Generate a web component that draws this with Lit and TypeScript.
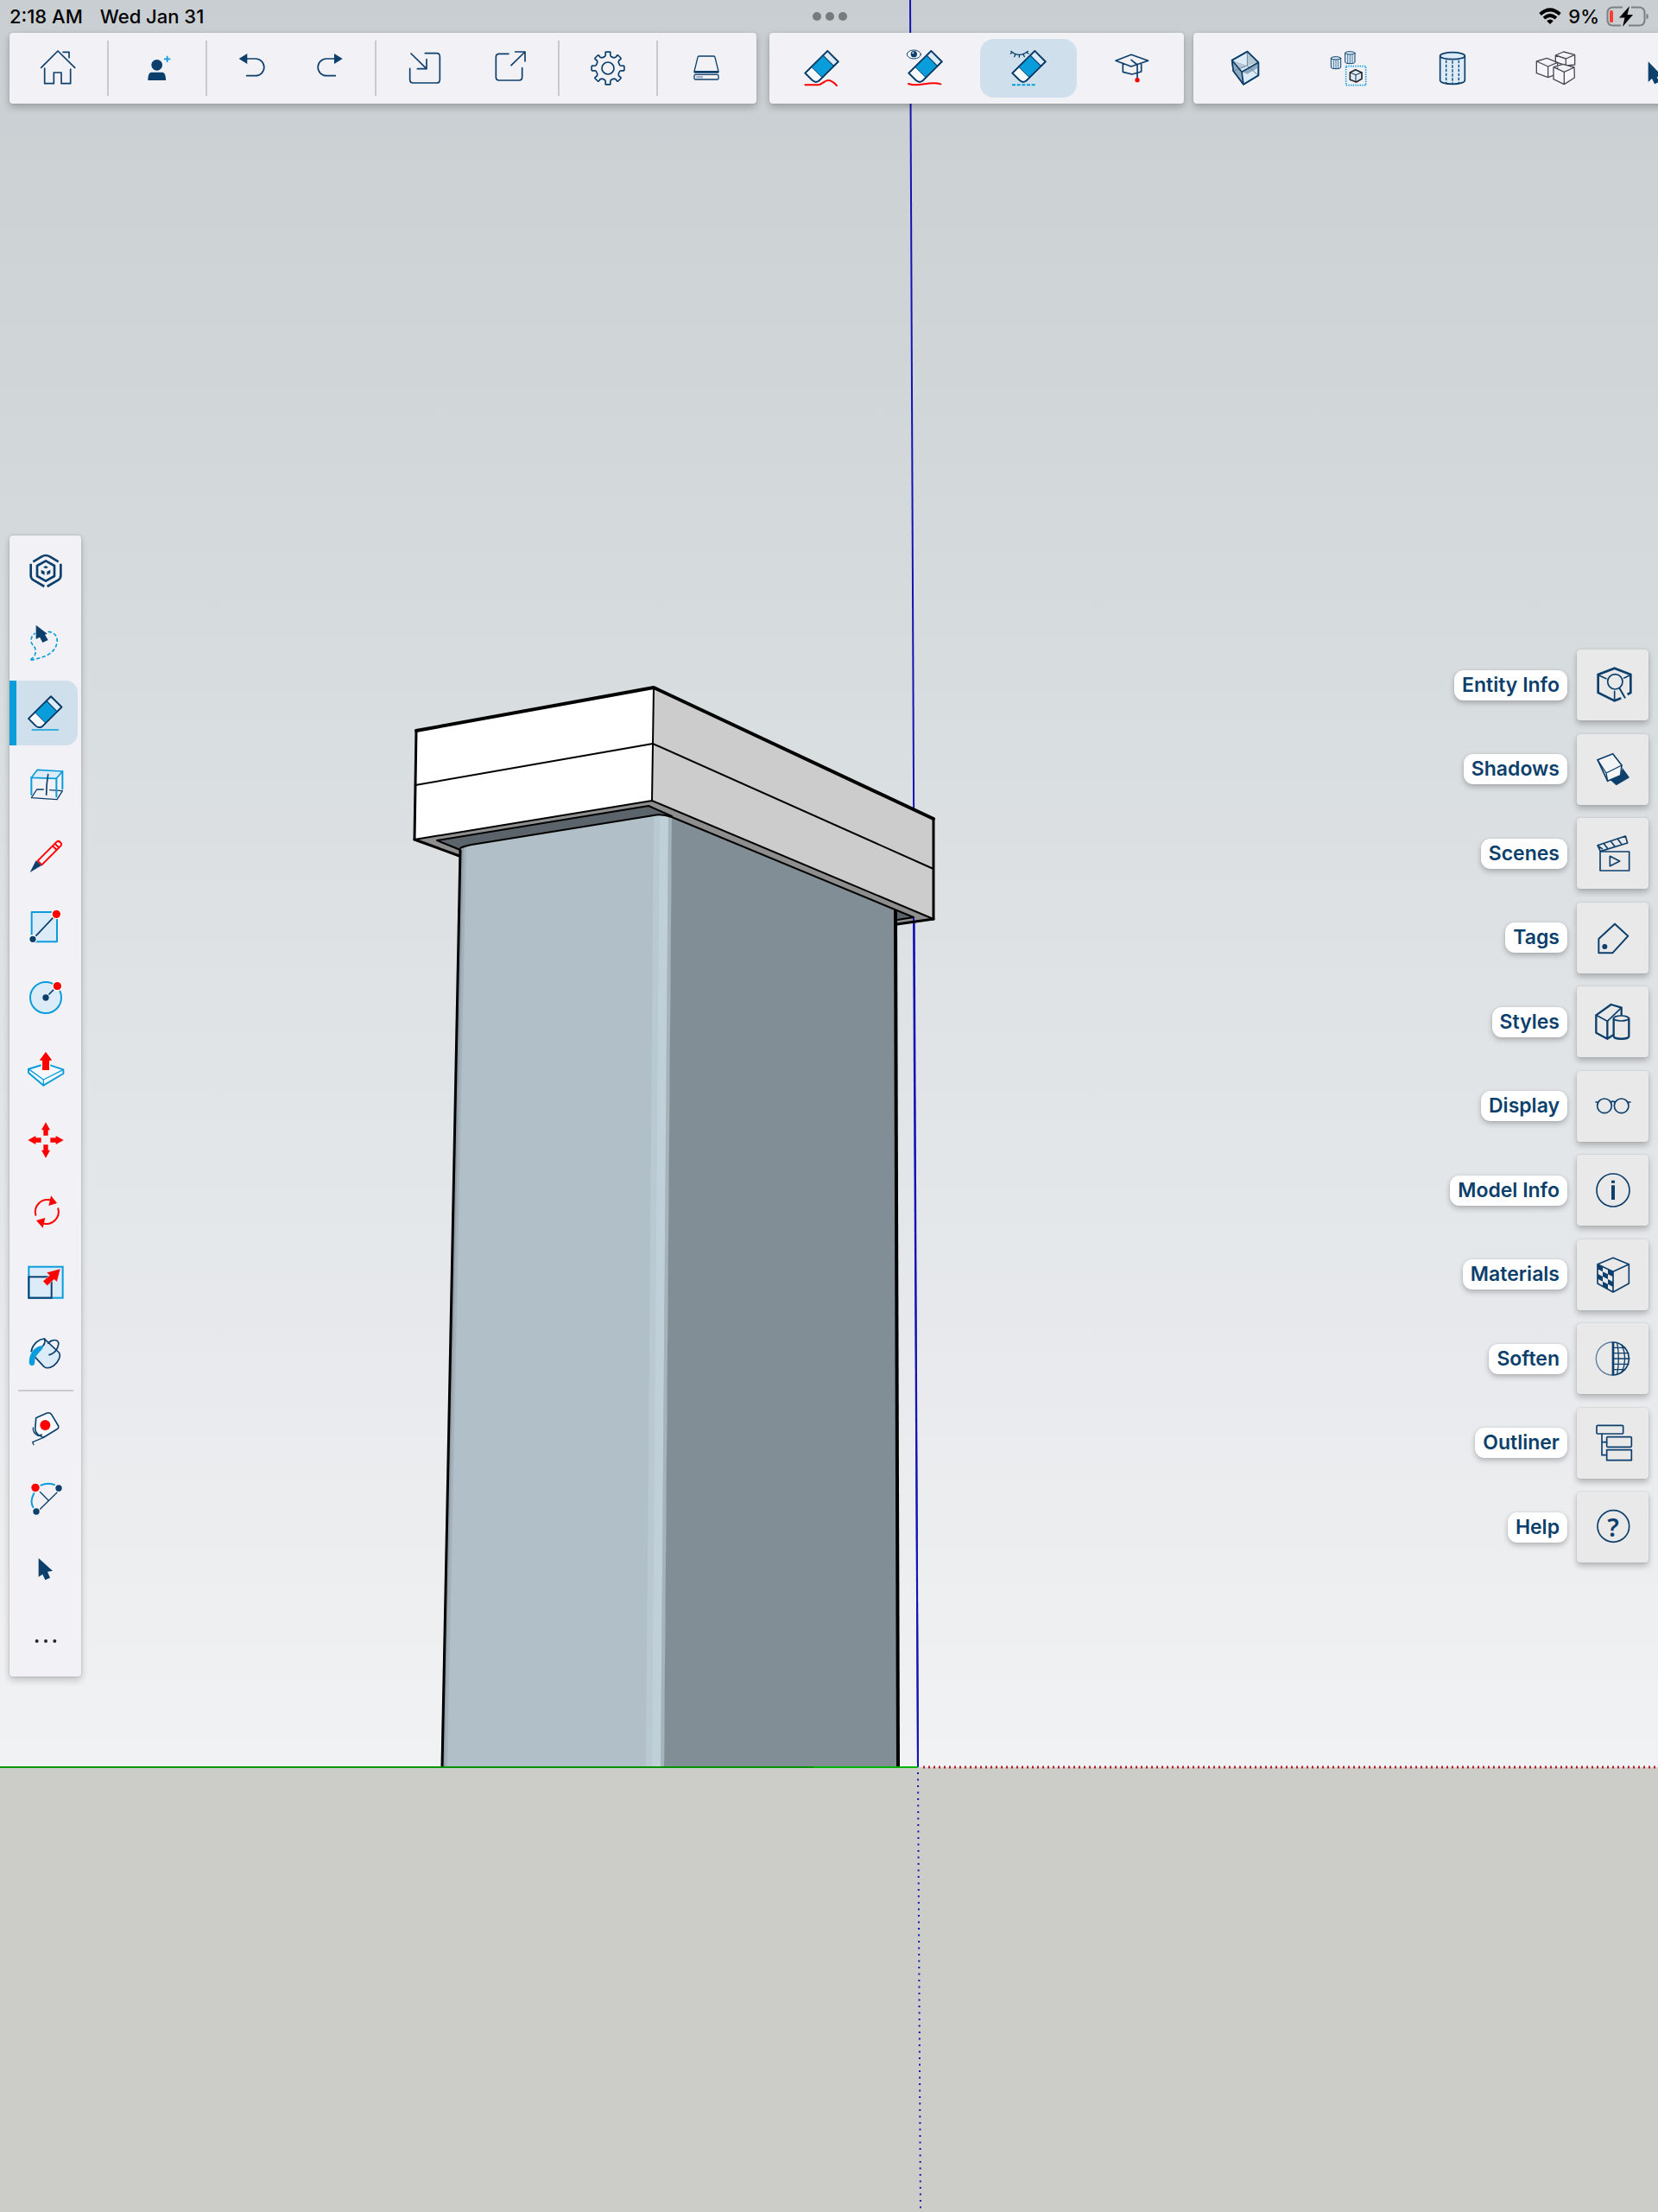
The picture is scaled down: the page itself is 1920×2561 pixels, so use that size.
import { LitElement, html, svg, css, SVGTemplateResult } from "lit";
import { customElement, property, state } from "lit/decorators.js";
import { classMap } from "lit/directives/class-map.js";

const NAVY = "#0d3f6c";
const SKY = "#0a9ddb";
const PALE = "#dcebf8";
const RED = "#ff0000";

const polar = (r: number, deg: number) => {
  const a = (deg * Math.PI) / 180;
  return `${(r * Math.cos(a)).toFixed(1)} ${(r * Math.sin(a)).toFixed(1)}`;
};

// Outline of a cog with eight teeth.
const cogPath = () => {
  const parts: string[] = [];
  for (let k = 0; k < 8; k++) {
    const a = k * 45;
    parts.push(
      `${k ? "L" : "M"}${polar(43, a - 13)} L${polar(47, a - 10)} L${polar(56, a - 9)} L${polar(57, a - 6)} L${polar(57, a + 6)} L${polar(56, a + 9)} L${polar(47, a + 10)} L${polar(43, a + 13)} Q${polar(40, a + 22.5)} ${polar(43, a + 32)}`,
    );
  }
  return parts.join(" ") + "Z";
};

// Checker cells on the left face of the materials cube.
const checker = () => {
  const cells: SVGTemplateResult[] = [];
  const pt = (u: number, v: number) => {
    const top = -37 + 26 * u;
    const bottom = 30 + 30 * u;
    return `${-54 + 54 * u},${top + (bottom - top) * v}`;
  };
  for (let c = 0; c < 3; c++)
    for (let r = 0; r < 4; r++)
      if ((c + r) % 2 === 0)
        cells.push(
          svg`<polygon points="${pt(c / 3, r / 4)} ${pt((c + 1) / 3, r / 4)} ${pt((c + 1) / 3, (r + 1) / 4)} ${pt(c / 3, (r + 1) / 4)}" fill=${NAVY} stroke="none"/>`,
        );
  return cells;
};

const eraser = svg`
  <path d="M22 -60 L59 -23 L-8 44 Q-20 52 -32 41 L-56 17Z" fill="#f6f9fd"/>
  <path d="M22 -60 L59 -23 L43 -7 L6 -44Z" fill=${PALE}/>
  <path d="M6 -44 L43 -7 L3 32 L-34 -5Z" fill=${SKY} stroke-width="3"/>
  <path d="M22 -60 L59 -23 L-8 44 Q-20 52 -32 41 L-56 17Z"/>`;

const moveArrow = "M0 -62 L15 -35 H8 V-16 H-8 V-35 H-15Z";
const pointer = "M-25 -39 V26 L-11 17 L-2 37 L15 29 L6 8 L24 5Z";

const miniCylinder = (x: number, y: number) => svg`
  <g transform="translate(${x} ${y})" stroke-width="3">
    <path d="M-17 -16 V16 A17 5 0 0 0 17 16 V-16" fill=${PALE}/>
    <ellipse cx="0" cy="-16" rx="17" ry="5" fill=${PALE}/>
    <path d="M-8 -9 V19 M0 -9 V20 M8 -9 V19" stroke-width="2"/>
  </g>`;

const icons: Record<string, SVGTemplateResult> = {
  home: svg`<path d="M-61 -2 L-3 -60 L56 -2 M15 -56 H36 V-37 M-49 0 V53 H-17 V15 H9 V53 H41 V3"/>`,
  invite: svg`<g fill=${NAVY} stroke="none"><circle cx="-1" cy="-11" r="19"/><path d="M-32 42 V36 Q-30 14 -20 14 H18 Q28 14 30 36 V42Z"/></g><path d="M24 -32 H46 M35 -43 V-21" stroke=${SKY} stroke-width="5" stroke-linecap="butt"/>`,
  undo: svg`<path d="M-46 -33 L-17 -51 V-15Z" fill=${NAVY} stroke="none"/><path d="M-18 -33 H12 A29 29 0 0 1 12 26 H-19"/>`,
  redo: svg`<path d="M44 -33 L15 -51 V-15Z" fill=${NAVY} stroke="none"/><path d="M16 -33 H-12 A29 29 0 0 0 -12 26 H19"/>`,
  import: svg`<path d="M1 -52 H41 Q52 -52 52 -41 V40 Q52 51 41 51 H-41 Q-52 51 -52 40 V1 M-48 -51 L6 2 M-26 2 H6 V-31"/>`,
  export: svg`<path d="M-6 -50 H-39 Q-50 -50 -50 -39 V31 Q-50 42 -39 42 H30 Q41 42 41 31 V-1 M3 -10 L51 -57 M17 -57 H51 V-24"/>`,
  settings: svg`<path d=${cogPath()}/><circle r="21"/>`,
  storage: svg`<g stroke-width="4"><path d="M-30 -38 Q-29 -42 -26 -42 H26 Q29 -42 30 -38 L42 11 Q43 15 39 15 H-39 Q-43 15 -42 11Z M-40 11 H40"/><rect x="-42" y="22" width="84" height="17" rx="4"/></g><rect x="-35" y="27" width="23" height="7" fill="#9fb0c4" stroke="none"/>`,
  erase: svg`${eraser}<path d="M-56 58 H-13 C5 58 10 42 24 42 C38 42 47 53 54 60" stroke=${RED} stroke-width="6"/>`,
  hide: svg`${eraser}<ellipse cx="-38" cy="-48" rx="24" ry="15" fill="#f6f9fd" stroke-width="3"/><circle cx="-38" cy="-49" r="11" fill=${NAVY} stroke="none"/><circle cx="-41" cy="-53" r="3" fill="#ffffff" stroke="none"/><path d="M-57 54 C-20 68 15 42 55 55" stroke=${RED} stroke-width="6"/>`,
  soften: svg`${eraser}<path d="M-61 -59 Q-32 -34 -2 -59 M-57 -55 L-62 -51 M-46 -48 L-49 -40 M-32 -46 V-38 M-18 -48 L-14 -40 M-6 -55 L0 -51" stroke-width="4"/><path d="M-57 58 H26" stroke=${SKY} stroke-width="6" stroke-dasharray="12 5" stroke-linecap="butt"/>`,
  learn: svg`<path d="M-57 -26 L-3 -47 L56 -26 L-3 -6Z M-32 -17 V13 L0 21 L32 12 V-17 M-3 -29 L18 -12 V38"/><circle cx="18" cy="41" r="8" fill=${RED} stroke="none"/>`,
  xray: svg`<path d="M7 -58 L46 -20 V25 L-6 56 L-41 10 L-46 -28Z" fill=${PALE}/><path d="M7 -58 L46 -20 L7 -9Z M-46 -28 L7 -9 L-41 10Z" fill="#b5c6d3" stroke="none"/><path d="M-46 -28 L-12 13 L-6 56 L-41 10Z M-12 13 L46 -20 V-2 L7 20Z" fill="#90a9bd" stroke="none"/><path d="M7 -58 V-9 L46 25 M7 -9 L-41 10" stroke-width="3" stroke="#6e8497"/><path d="M7 -58 L46 -20 V25 L-6 56 L-41 10 L-46 -28Z M-46 -28 L-12 13 L46 -20 M-12 13 L-6 56"/>`,
  isolate: svg`${miniCylinder(-45, -19)}${miniCylinder(4, -37)}<rect x="-10" y="-7" width="69" height="66" stroke=${SKY} stroke-width="5" stroke-dasharray="4 4" stroke-linecap="butt"/><g stroke="#25272f"><path d="M23 5 L45 15 V37 L26 48 L4 40 V15Z" fill=${PALE}/><path d="M4 15 L24 23 L45 15 M24 23 V48" stroke-width="3"/></g>`,
  component: svg`<path d="M-43 -43 V43 A43 12 0 0 0 43 43 V-43" fill=${PALE}/><ellipse cy="-43" rx="43" ry="12" fill=${PALE}/><path d="M-22 -28 V52 M0 -26 V54 M22 -28 V52" stroke-width="4" stroke-dasharray="10 5" stroke-linecap="butt"/>`,
  group: svg`<g stroke="#4a4a58" stroke-width="4" fill="#f6f6fa"><path d="M26 -57 L65 -47 V-12 L34 -9 L-2 -22 V-45Z M-2 -45 L34 -33 L65 -47 M34 -33 V-9"/><path d="M-32 -35 L5 -20 V19 L-28 32 L-68 17 V-24Z M-68 -24 L-28 -6 L5 -20 M-28 -6 V32"/><path d="M24 -14 L63 -3 L64 33 L28 56 L-9 38 V-4Z M-9 -4 L28 13 L63 -3 M28 13 V56"/></g>`,
  pick: svg`<path d="M-40 -23 V48 L-27 36 L-18 55 L-2 48 L-10 30 L10 28Z" fill=${NAVY} stroke="none"/>`,
  brand: svg`<g stroke-width="8" stroke-linecap="butt"><path d="M-44 -32 L-14 -50 Q0 -58 14 -50 L44 -32 M-52 -25 V16 Q-52 26 -44 31 L-5 54 M52 -25 V16 Q52 26 44 31 L5 54"/><path d="M0 -35 L30 -18 V18 L0 35 L-30 18 V-18Z"/></g><path d="M0 -18 L9 -13 L0 -8 L-9 -13Z M-16 -4 L-4 2 V14 L-16 8Z M16 -4 L4 2 V14 L16 8Z" fill=${NAVY} stroke="none"/>`,
  lasso: svg`<path d="M8 -38 C32 -36 42 -20 39 0 C33 34 2 52 -56 61 C-38 50 -34 40 -36 24 C-38 10 -50 10 -51 -6 C-51 -20 -45 -28 -36 -32" stroke=${SKY} stroke-dasharray="13 7" stroke-linecap="butt"/><path d="M-34 -61 L5 -31 L-3 -28 L8 -9 L-11 0 L-21 -19 L-34 -12Z" fill=${NAVY} stroke="none"/>`,
  eraseLine: svg`<g transform="translate(-4 1)">${eraser}</g><path d="M-47 57 H43" stroke=${SKY}/>`,
  solid: svg`<path d="M-31 18 H-8 M14 20 L58 23 L39 53 L-50 47 L-31 18" stroke-width="4"/><path d="M-50 -23 L-29 -50 L58 -45 L37 -20Z" fill=${PALE} stroke=${SKY}/><path d="M-50 -23 V36 M58 -45 V16 M37 -20 V43" stroke=${SKY} stroke-width="6"/><path d="M8 -34 Q2 0 2 37"/>`,
  pencil: svg`<path d="M-28 17 L38 -49 Q44 -54 50 -48 Q58 -41 52 -35 L-14 31Z M24 -35 L38 -21 M32 -42 L46 -29" stroke=${RED} stroke-width="6"/><path d="M-55 57 L-34 16 L-15 33Z" fill=${NAVY} stroke="none"/>`,
  rect: svg`<rect x="-49" y="-51" width="88" height="103" fill=${PALE} stroke=${SKY} stroke-width="6"/><path d="M-45 43 L37 -44"/><g stroke="#ffffff" stroke-width="4"><circle cx="37" cy="-44" r="16" fill=${RED}/><circle cx="-45" cy="43" r="13" fill=${NAVY}/></g>`,
  circle: svg`<circle r="54" fill=${PALE} stroke=${SKY} stroke-width="6"/><path d="M0 0 L40 -40"/><g stroke="#ffffff" stroke-width="4"><circle cx="40" cy="-40" r="16" fill=${RED}/><circle r="13" fill=${NAVY} stroke=${PALE}/></g>`,
  push: svg`<path d="M-16 -14 L-60 -1 V12 L-8 56 L61 15 V1 L16 -14" stroke=${SKY} fill="#f6f9fd" stroke-width="6"/><path d="M-60 -1 L-8 36 L61 1 M-8 36 V56" stroke=${SKY} stroke-width="4"/><path d="M0 -64 L26 -29 H14 V5 H-14 V-29 H-26Z" fill=${RED} stroke="#ffffff" stroke-width="4"/>`,
  move: svg`<g fill=${RED} stroke="none"><path d=${moveArrow}/><path d=${moveArrow} transform="rotate(90)"/><path d=${moveArrow} transform="rotate(180)"/><path d=${moveArrow} transform="rotate(270)"/></g>`,
  rotate: svg`<path d="M-35 11 A42 42 0 0 1 14 -41 M43 -11 A42 42 0 0 1 -6 41" stroke=${RED} stroke-width="6"/><path d="M18 -56 L39 -30 L10 -21Z M-10 56 L-33 30 L-2 21Z" fill=${RED} stroke="none"/>`,
  scale: svg`<rect x="-59" y="-55" width="118" height="108" fill=${PALE} stroke=${SKY} stroke-width="6" stroke-linejoin="miter"/><rect x="-59" y="-20" width="79" height="73" stroke-width="6" stroke-linejoin="miter"/><path d="M51 -48 L39 -2 L29 -11 L5 11 L-10 -5 L13 -25 L3 -35Z" fill=${RED} stroke=${PALE} stroke-width="2"/>`,
  paint: svg`<path d="M-50 -8 C-44 -36 -20 -52 -4 -50 L46 -3 C54 8 44 30 28 42 Q8 56 -6 46 L-36 14" fill=${PALE}/><path d="M-48 -12 C-44 -36 -20 -52 -4 -50 Q-2 -34 -22 -24Z" fill="#f6f9fd" stroke="none"/><path d="M-50 -8 C-44 -36 -20 -52 -4 -50 M12 5 C40 -2 52 -38 38 -45 C28 -50 14 -42 8 -36"/><path d="M-4 -50 Q0 -34 -14 -22"/><path d="M-8 -26 C-34 -30 -58 -4 -58 30 Q-57 42 -48 42 Q-38 42 -38 30 C-40 10 -24 -2 -12 -16Z" fill=${SKY} stroke="none"/>`,
  tape: svg`<path d="M-34 -30 Q-36 -34 -30 -36 L4 -51 Q15 -54 20 -46 L44 -6 Q46 0 41 4 L-8 34 Q-36 24 -37 4 Z" fill="#f6f9fd"/><path d="M-8 34 L-46 50 L-42 59 M-44 0 Q-46 18 -26 28 L-14 24" stroke-width="4"/><circle cx="-2" cy="-9" r="18" fill=${RED} stroke="none"/>`,
  protractor: svg`<path d="M-17 -46 Q5 -56 30 -48 M-41 -18 Q-56 10 -44 30" stroke=${SKY} stroke-width="6"/><path d="M-20 -23 L9 6 M39 -21 L-19 36" stroke-width="4"/><g stroke="none" fill=${NAVY}><circle cx="-36" cy="-38" r="14" fill=${RED}/><circle cx="45" cy="-36" r="11"/><circle cx="-33" cy="45" r="11"/></g>`,
  select: svg`<path d=${pointer} fill=${NAVY} stroke="none"/>`,
  more: svg`<g fill="#25272f" stroke="none"><circle cx="-31" r="6"/><circle r="6"/><circle cx="31" r="6"/></g>`,
  entity: svg`<path d="M28 46 L5 55 L-52 27 V-36 L5 -58 L61 -36 V27 L50 33" stroke-width="8" stroke-linejoin="miter" stroke-linecap="butt"/><path d="M-50 -34 L-24 -22 M59 -34 L38 -24 M5 22 V50"/><circle cx="7" cy="-11" r="26"/><path d="M23 13 L41 44" stroke-width="6"/>`,
  shadows: svg`<path d="M-10 36 L26 20 L33 -5 L57 28 L11 55Z" fill=${NAVY} stroke="none"/><path d="M-54 -34 L-1 -55 L30 -15 L26 20 L-19 40Z" fill="#f2f4f5" stroke-width="5"/><path d="M30 -15 L-24 12 L-54 -34 M-24 12 L-19 40" stroke-width="4"/>`,
  scenes: svg`<path d="M-45 -6 H56 V60 H-45Z M-11 10 L23 27 L-11 44Z"/><path d="M-54 -28 L43 -60 L50 -36 L-44 -7Z M-32 -34 L-18 -16 M-8 -42 L6 -24 M16 -50 L30 -31 M-50 -24 L-38 -16"/>`,
  tags: svg`<path d="M6 -49 L52 -7 L-2 52 H-50 V3Z" stroke-width="6"/><circle cx="-29" cy="30" r="9" fill=${NAVY} stroke="none"/>`,
  styles: svg`<path d="M-20 -2 V59 L-59 38 V-23 L-7 -60 L29 -49 V-24 M-20 59 L-2 47" stroke-width="7"/><path d="M-59 -23 L-20 -2 L29 -49"/><path d="M2 -12 V50 A26 9 0 0 0 55 50 V-12" fill="#e9e9ea" stroke-width="7"/><ellipse cx="28" cy="-12" rx="26" ry="9" fill="#e9e9ea"/>`,
  display: svg`<circle cx="-30" cy="-2" r="25"/><circle cx="29" cy="-2" r="25"/><path d="M-8 -15 Q-1 -20 7 -15 M-60 -15 H-51 M50 -15 H60"/>`,
  info: svg`<circle r="57"/><path d="M-6 -34 H6 V-25 H-6Z M-6 -17 H6 V33 H-6Z" fill=${NAVY} stroke="none"/>`,
  materials: svg`${checker()}<path d="M0 -59 L55 -37 V30 L0 60 L-54 30 V-37Z M-54 -37 L0 -11 L55 -37 M0 -11 V60"/>`,
  softness: svg`<path d="M-2 -57 A57 57 0 0 0 -2 57" stroke="#5c7d9c" stroke-width="4"/><path d="M-2 -57 A57 57 0 0 1 -2 57"/><path d="M0 -57 V57" stroke-width="8" stroke-linecap="butt"/><path d="M0 -38 H42 M0 -19 H54 M0 0 H57 M0 19 H54 M0 38 H42 M14 -55 Q24 0 14 55 M30 -48 Q52 0 30 48" stroke-width="4"/>`,
  outliner: svg`<rect x="-57" y="-62" width="92" height="29" rx="3"/><rect x="-22" y="-22" width="86" height="35" rx="3"/><path d="M-22 23 H64 V59 H-22Z M-39 -32 V41 H-22 M-39 -4 H-22"/>`,
  help: svg`<circle cx="1" cy="-3" r="55"/><text x="0" y="32" text-anchor="middle" class="mark">?</text>`,
};

@customElement("tool-icon")
class ToolIcon extends LitElement {
  @property() name = "";
  static styles = css`
    :host { display: block; width: 48px; height: 48px; flex: none; }
    .icon { display: block; width: 100%; height: 100%; overflow: visible; fill: none; stroke: #0d3f6c; stroke-width: 5; stroke-linecap: round; stroke-linejoin: round; }
    .mark { font: 600 88px "Noto Sans", sans-serif; fill: #0d3f6c; stroke: none; }
  `;
  render() {
    return html`<svg class="icon" viewBox="-72 -72 144 144" aria-hidden="true">${icons[this.name]}</svg>`;
  }
}

@customElement("model-view")
class ModelView extends LitElement {
  static styles = css`
    :host { display: block; overflow: hidden; }
    .view { display: block; width: 100%; height: 100%; }
    .edge { fill: none; stroke: #000000; stroke-width: 2; stroke-linejoin: round; stroke-linecap: round; }
    .outer { stroke-width: 3; }
    .bold { stroke-width: 4; }
  `;
  render() {
    return html`<svg class="view" viewBox="0 0 1920 2561" preserveAspectRatio="xMidYMid slice" role="img" aria-label="Model">
      <defs>
        <linearGradient id="sky" x1="0" y1="0" x2="0" y2="1">
          <stop offset="0" stop-color="#c8ced1" />
          <stop offset="0.4" stop-color="#d8dddf" />
          <stop offset="1" stop-color="#f1f2f4" />
        </linearGradient>
        <linearGradient id="round" gradientUnits="userSpaceOnUse" x1="757" y1="944" x2="778" y2="944.17">
          <stop offset="0" stop-color="#b1bfc8" />
          <stop offset="0.3" stop-color="#bbccd5" />
          <stop offset="0.7" stop-color="#c0d0d9" />
          <stop offset="0.9" stop-color="#a9b8c0" />
          <stop offset="1" stop-color="#828e95" />
        </linearGradient>
      </defs>
      <rect width="1920" height="2046" fill="url(#sky)" />
      <rect y="2046" width="1920" height="515" fill="#cccdc8" />
      <path d="M1054 0 L1063 2046" stroke="#1414b4" stroke-width="2" />

      <path d="M480 972 L755 927 L1081 1064 L1039 1070 L900 1000 L533 991Z" fill="#8e8e8e" />
      <path d="M506 973 L751 933 L775 944 L1058 1062 L1039 1065 L760 960 L533 984Z" fill="#5b646b" />
      <path d="M1058 1062 L1063 2046" stroke="#1414b4" stroke-width="2" />
      <path d="M533 983 Q536 980 546 978 L757 944 L770 943 L760 2046 H511Z" fill="#b1bfc8" />
      <path d="M533 984 L511 2046 H518 L540 980Z" fill="#98a5ad" opacity="0.5" />
      <path d="M533 984 L511 2046 H515 L537 980Z" fill="#87939a" opacity="0.6" />
      <path d="M757 944 Q766 942 778 946 L769 2046 H748Z" fill="url(#round)" />
      <path d="M757 944 L748 2046 H755 L764 944Z" fill="#b9c9d2" />
      <path d="M764 943 L755 2046 H765 L774 944Z" fill="#c0d0d9" />
      <path d="M774 944 L765 2046 H769 L778 946Z" fill="#a5b3bb" />
      <path d="M778 946 L1037 1054 L1039 2046 H769Z" fill="#828e95" />
      <path class="edge" d="M533 982 Q536 980 546 978 L757 944 Q766 942 778 946 L1058 1062 L1039 1065" />
      <path class="edge" d="M533 984 L506 973 L751 933 L778 945" />
      <path class="edge outer" d="M480 972 L532 991 M1081 1064 L1039 1070" />
      <path d="M533 984 L512 2046" stroke="#000000" stroke-width="3" />
      <path d="M1037 1054 L1040 2046" stroke="#000000" stroke-width="4" />

      <path d="M482 846 L757 796 L755 927 L480 972Z" fill="#ffffff" />
      <path d="M757 796 L1081 948 V1064 L755 927Z" fill="#cccccc" />
      <path class="edge" d="M480 972 L755 927 L1081 1064 M757 796 L755 927 M481 909 L756 861 L1081 1006" />
      <path class="edge outer" d="M482 846 L480 972 M1081 948 V1064" />
      <path class="edge bold" d="M482 846 L757 796 L1081 948" />

      <path d="M0 2046 H942" stroke="#009400" stroke-width="2" />
      <path d="M942 2046 H1063" stroke="#00b400" stroke-width="2" />
      <path d="M1069 2046 H1920" stroke="#b4232a" stroke-width="3" stroke-dasharray="2 4" />
      <path d="M1063 2052 L1066 2561" stroke="#1414b4" stroke-width="2" stroke-dasharray="2 5.5" />
    </svg>`;
  }
}

interface Tool {
  icon: string;
  label: string;
}

const fileGroups: { kind: string; tools: Tool[] }[] = [
  { kind: "single", tools: [{ icon: "home", label: "Home" }] },
  { kind: "single", tools: [{ icon: "invite", label: "Invite" }] },
  { kind: "history", tools: [{ icon: "undo", label: "Undo" }, { icon: "redo", label: "Redo" }] },
  { kind: "transfer", tools: [{ icon: "import", label: "Import" }, { icon: "export", label: "Export" }] },
  { kind: "single", tools: [{ icon: "settings", label: "Settings" }] },
  { kind: "single", tools: [{ icon: "storage", label: "Storage" }] },
];

const modes: Tool[] = [
  { icon: "erase", label: "Erase" },
  { icon: "hide", label: "Hide" },
  { icon: "soften", label: "Soften edges" },
  { icon: "learn", label: "Learn" },
];

const actions: Tool[] = [
  { icon: "xray", label: "X-ray" },
  { icon: "isolate", label: "Isolate" },
  { icon: "component", label: "Make component" },
  { icon: "group", label: "Make group" },
  { icon: "pick", label: "Pick" },
];

const drawTools: Tool[] = [
  { icon: "brand", label: "Workspace" },
  { icon: "lasso", label: "Lasso" },
  { icon: "eraseLine", label: "Eraser" },
  { icon: "solid", label: "Solid" },
  { icon: "pencil", label: "Line" },
  { icon: "rect", label: "Rectangle" },
  { icon: "circle", label: "Circle" },
  { icon: "push", label: "Push/Pull" },
  { icon: "move", label: "Move" },
  { icon: "rotate", label: "Rotate" },
  { icon: "scale", label: "Scale" },
  { icon: "paint", label: "Paint" },
];

const recentTools: Tool[] = [
  { icon: "tape", label: "Tape Measure" },
  { icon: "protractor", label: "Protractor" },
  { icon: "select", label: "Select" },
  { icon: "more", label: "More" },
];

const panels: Tool[] = [
  { icon: "entity", label: "Entity Info" },
  { icon: "shadows", label: "Shadows" },
  { icon: "scenes", label: "Scenes" },
  { icon: "tags", label: "Tags" },
  { icon: "styles", label: "Styles" },
  { icon: "display", label: "Display" },
  { icon: "info", label: "Model Info" },
  { icon: "materials", label: "Materials" },
  { icon: "softness", label: "Soften" },
  { icon: "outliner", label: "Outliner" },
  { icon: "help", label: "Help" },
];

@customElement("app-root")
class AppRoot extends LitElement {
  @state() private mode = "soften";
  @state() private tool = "eraseLine";

  static styles = css`
    :host { display: grid; grid-template: minmax(100vh, auto) / minmax(0, 1fr); overflow: hidden; font-family: Inter, "Liberation Sans", sans-serif; color: #000000; }
    * { box-sizing: border-box; }
    button { appearance: none; margin: 0; padding: 0; border: 0; background: none; font: inherit; color: inherit; cursor: pointer; display: flex; align-items: center; justify-content: center; }
    .scene, .top, .tools, .panels { grid-area: 1 / 1; }
    .scene { contain: size; }
    .top { align-self: start; z-index: 1; min-width: 0; }
    .status { display: grid; grid-template-columns: 1fr auto 1fr; align-items: center; height: 38px; padding: 0 10px 0 11px; font-size: 22px; font-weight: 500; line-height: 36px; }
    .clock { display: flex; gap: 20px; }
    .windows { gap: 5px; height: 36px; }
    .dot { width: 10px; height: 10px; border-radius: 50%; background: #767b7e; }
    .power { display: flex; justify-content: flex-end; align-items: center; gap: 8px; }
    .wifi { width: 26px; height: 20px; }
    .battery { width: 50px; height: 24px; }
    .bars { display: flex; padding-left: 11px; }
    .bar { display: flex; flex: none; align-items: center; height: 82px; border-radius: 4px; background: #f1f1f6; box-shadow: 0 4px 8px rgb(0 0 0 / 24%), 0 0 2px rgb(0 0 0 / 12%); }
    .bar + .bar { margin-left: 15px; }
    .bar + .bar + .bar { margin-left: 11px; }
    .cluster { display: flex; justify-content: center; height: 64px; }
    .cluster + .cluster { border-left: 2px solid #c9cacf; }
    .single { width: 114px; }
    .single:first-child { width: 113px; }
    .history { width: 196px; }
    .transfer { width: 212px; gap: 9px; }
    .single:last-child { width: 116px; padding-right: 2px; }
    .cluster button { width: 90px; height: 64px; }
    .mode { width: 112px; height: 68px; margin: 0 4px; border-radius: 16px; }
    .active { background: #cfe0ec; }
    .tools { align-self: center; justify-self: start; z-index: 1; display: flex; flex-direction: column; width: 83px; min-height: 1321px; margin-left: 11px; border-radius: 4px; background: #f1f1f6; box-shadow: 0 4px 8px rgb(0 0 0 / 20%), 0 0 3px rgb(0 0 0 / 16%); }
    .cell { flex: 1; display: flex; align-items: center; }
    .cell button { width: 83px; height: 75px; }
    .cell .active { width: 79px; padding-right: 4px; border-left: 8px solid #0a9ddb; border-radius: 0 14px 14px 0; }
    .rule { width: 64px; height: 2px; margin: 0 auto 1px; border: 0; background: #c9cacf; }
    .panels { align-self: center; justify-self: end; z-index: 1; display: flex; flex-direction: column; justify-content: space-between; min-height: 1057px; margin: 0 11px 0 0; padding: 0; list-style: none; }
    .panel { display: flex; justify-content: flex-end; align-items: center; gap: 11px; }
    .name { padding: 0 9px; border-radius: 11px; background: #ffffff; color: #0d3f6c; font-size: 23px; font-weight: 600; line-height: 35px; white-space: nowrap; cursor: pointer; box-shadow: 0 3px 6px rgb(0 0 0 / 24%), 0 0 2px rgb(0 0 0 / 12%); }
    .open { width: 83px; height: 82px; border-radius: 4px; background: #e9e9ea; box-shadow: 0 4px 7px rgb(0 0 0 / 24%), 0 0 2px rgb(0 0 0 / 14%); }
  `;

  private cell(t: Tool) {
    return html`<div class="cell">
      <button class=${classMap({ active: this.tool === t.icon })} aria-label=${t.label} @click=${() => (this.tool = t.icon)}>
        <tool-icon name=${t.icon}></tool-icon>
      </button>
    </div>`;
  }

  render() {
    return html`
      <model-view class="scene"></model-view>
      <header class="top">
        <div class="status">
          <div class="clock"><span>2:18 AM</span><span>Wed Jan 31</span></div>
          <button class="windows" aria-label="Windows"><span class="dot"></span><span class="dot"></span><span class="dot"></span></button>
          <div class="power">
            <svg class="wifi" viewBox="0 0 26 20" fill="none" stroke="#000000" stroke-width="4" aria-hidden="true">
              <path d="M1.6 7.4 Q13 -2.6 24.4 7.4" /><path d="M6 12 Q13 5.8 20 12" /><path d="M13 19 L9.2 15.2 Q13 12 16.8 15.2Z" fill="#000000" stroke="none" />
            </svg>
            <span>9%</span>
            <svg class="battery" viewBox="0 0 50 24" fill="none" aria-hidden="true">
              <path d="M19 1.5 H8 Q1.5 1.5 1.5 8 V16 Q1.5 22.5 8 22.5 H17 M29 1.5 H38 Q44.5 1.5 44.5 8 V16 Q44.5 22.5 38 22.5 H26" stroke="#7b8083" stroke-width="2" />
              <path d="M46.5 8.5 Q49 9.5 49 12 Q49 14.5 46.5 15.5Z" fill="#7b8083" />
              <rect x="4" y="5" width="4" height="14" rx="1.5" fill="#ff3b30" />
              <path d="M27 0 L15 13.5 H21.5 L19 24 L31 10 H24.5Z" fill="#000000" />
            </svg>
          </div>
        </div>
        <div class="bars">
          <nav class="bar" aria-label="File">
            ${fileGroups.map((g) => html`<div class="cluster ${g.kind}">
              ${g.tools.map((t) => html`<button aria-label=${t.label}><tool-icon name=${t.icon}></tool-icon></button>`)}
            </div>`)}
          </nav>
          <nav class="bar" aria-label="Modes">
            ${modes.map((t) => html`<button class=${classMap({ mode: true, active: this.mode === t.icon })} aria-label=${t.label} @click=${() => (this.mode = t.icon)}>
              <tool-icon name=${t.icon}></tool-icon>
            </button>`)}
          </nav>
          <nav class="bar" aria-label="Actions">
            ${actions.map((t) => html`<button class="mode" aria-label=${t.label}><tool-icon name=${t.icon}></tool-icon></button>`)}
          </nav>
        </div>
      </header>
      <nav class="tools" aria-label="Tools">
        ${drawTools.map((t) => this.cell(t))}
        <hr class="rule" />
        ${recentTools.map((t) => this.cell(t))}
      </nav>
      <ul class="panels">
        ${panels.map((p) => html`<li class="panel">
          <label class="name" for="panel-${p.icon}">${p.label}</label>
          <button class="open" id="panel-${p.icon}"><tool-icon name=${p.icon}></tool-icon></button>
        </li>`)}
      </ul>
    `;
  }
}
